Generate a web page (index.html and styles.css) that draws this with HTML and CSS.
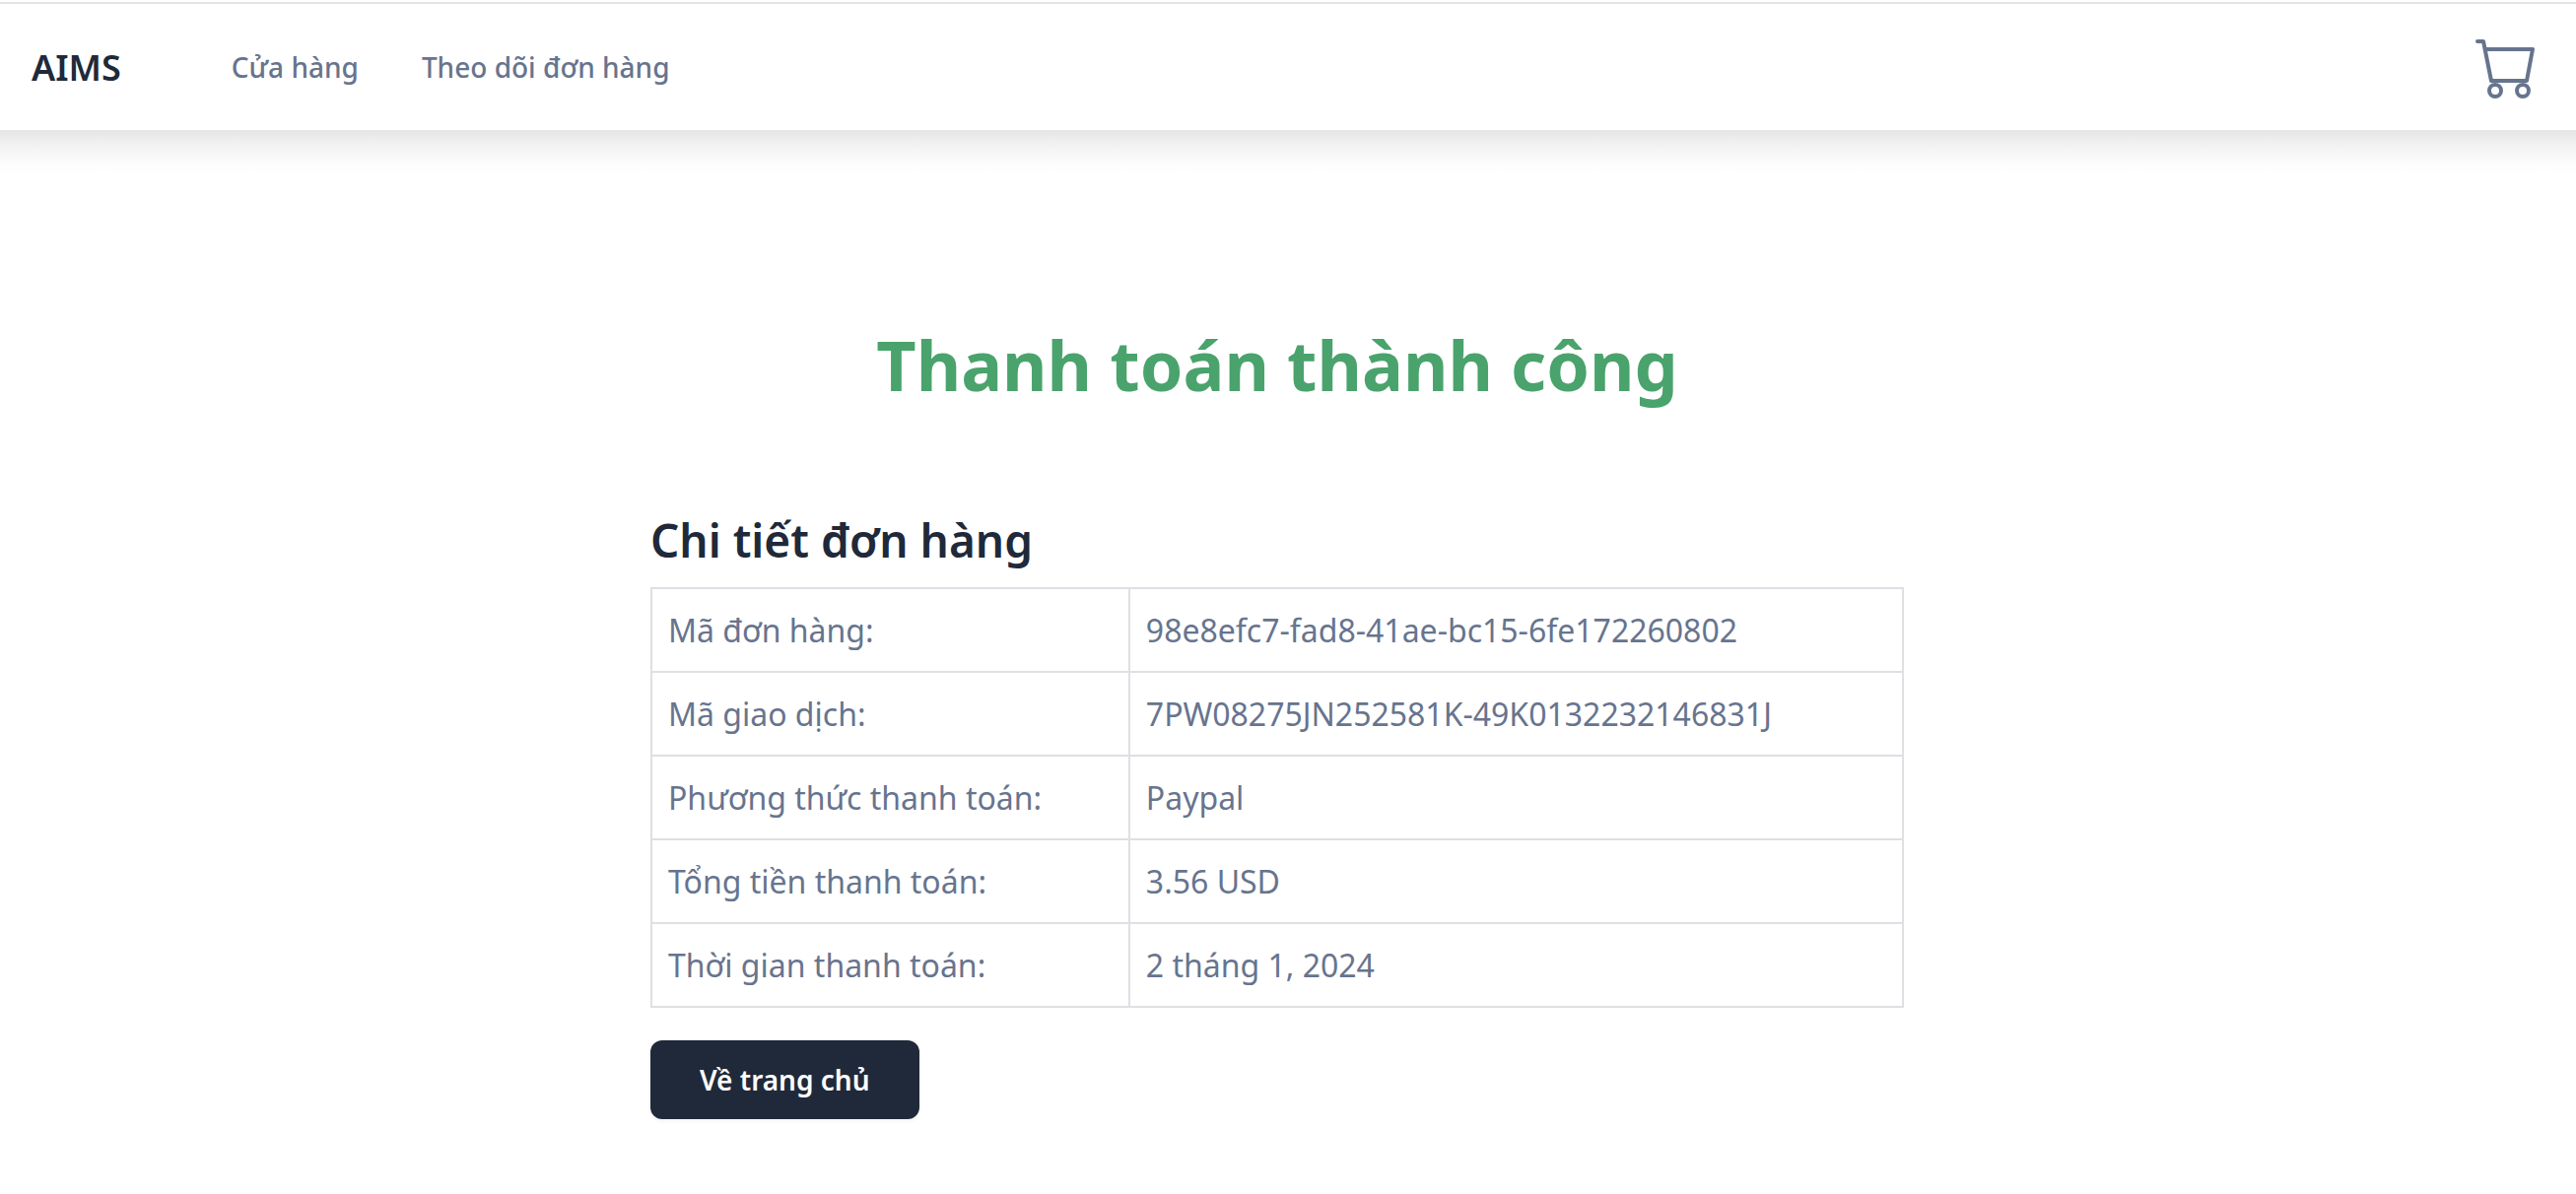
FILE: index.html
```html
<!DOCTYPE html>
<html lang="vi">
<head>
<meta charset="utf-8">
<meta name="viewport" content="width=device-width, initial-scale=1">
<title>AIMS</title>
<link rel="stylesheet" href="styles.css">
</head>
<body>
<header class="topbar">
  <a class="brand" href="#">AIMS</a>
  <nav class="nav">
    <a class="nav-link" href="#">Cửa hàng</a>
    <a class="nav-link" href="#">Theo dõi đơn hàng</a>
  </nav>
  <a class="cart" href="#" aria-label="Giỏ hàng">
    <svg class="cart-icon" viewBox="0 0 64 64" fill="none" stroke="currentColor" stroke-width="4" stroke-linecap="round" stroke-linejoin="round" aria-hidden="true">
      <path d="M4 4h6l8 40h36l6-32H12"/>
      <circle cx="22" cy="54" r="6"/>
      <circle cx="50" cy="54" r="6"/>
    </svg>
  </a>
</header>
<main class="page">
  <h1 class="title">Thanh toán thành công</h1>
  <section class="details">
    <h2 class="subtitle">Chi tiết đơn hàng</h2>
    <table class="order">
      <tbody>
        <tr><th scope="row">Mã đơn hàng:</th><td>98e8efc7-fad8-41ae-bc15-6fe172260802</td></tr>
        <tr><th scope="row">Mã giao dịch:</th><td>7PW08275JN252581K-49K0132232146831J</td></tr>
        <tr><th scope="row">Phương thức thanh toán:</th><td>Paypal</td></tr>
        <tr><th scope="row">Tổng tiền thanh toán:</th><td>3.56 USD</td></tr>
        <tr><th scope="row">Thời gian thanh toán:</th><td>2 tháng 1, 2024</td></tr>
      </tbody>
    </table>
    <button class="home-button" type="button">Về trang chủ</button>
  </section>
</main>
</body>
</html>
```
FILE: styles.css
```css
* {
  box-sizing: border-box;
}

body {
  margin: 0;
  padding-top: 2px;
  background: #fff;
  color: #67748e;
  font-family: "Noto Sans", sans-serif;
  font-size: 32px;
}

a {
  color: inherit;
  text-decoration: none;
}

.topbar {
  position: relative;
  display: flex;
  align-items: center;
  height: 130px;
  padding: 0 32px;
  border-top: 2px solid #e4e4e4;
  background: #fff;
}

/* Full-width shadow that does not fade at the sides */
.topbar::after {
  content: "";
  position: absolute;
  top: 100%;
  left: 0;
  right: 0;
  height: 48px;
  background: linear-gradient(rgb(0 4 4 / 0.105), rgb(0 16 10 / 0.06) 28%, rgb(0 16 10 / 0.03) 50%, rgb(0 16 10 / 0.008) 75%, transparent);
  pointer-events: none;
}

.brand {
  margin-right: 112px;
  color: #20293a;
  font-size: 36px;
  font-weight: 600;
}

.nav {
  display: flex;
  gap: 64px;
}

.nav-link {
  font-size: 28px;
  font-weight: 500;
}

.cart {
  display: flex;
  margin-left: auto;
  padding: 4px 8px 0;
}

.cart-icon {
  width: 64px;
  height: 64px;
}

.page {
  display: flex;
  flex-direction: column;
  align-items: center;
  padding: 190px 22px 64px 0;
}

.title {
  margin: 0 0 98px;
  color: #4aa36c;
  font-size: 70px;
  font-weight: 700;
  line-height: 96px;
}

.details {
  width: 50%;
  padding: 0 12px;
}

.subtitle {
  margin: 0 0 16px;
  color: #20293a;
  font-size: 46px;
  font-weight: 600;
  line-height: 64px;
}

.order {
  width: 100%;
  border-collapse: collapse;
  line-height: 51px;
}

.order th,
.order td {
  padding: 16px;
  border: 2px solid #dfdfe4;
  font-weight: 400;
  text-align: left;
}

.home-button {
  display: block;
  height: 80px;
  margin-top: 33px;
  padding: 0 50px;
  border: 0;
  border-radius: 12px;
  background: #20293a;
  color: #fff;
  font: 600 28px/40px "Noto Sans", sans-serif;
  box-shadow: 0 2px 4px rgb(0 0 0 / 0.05);
}
```
